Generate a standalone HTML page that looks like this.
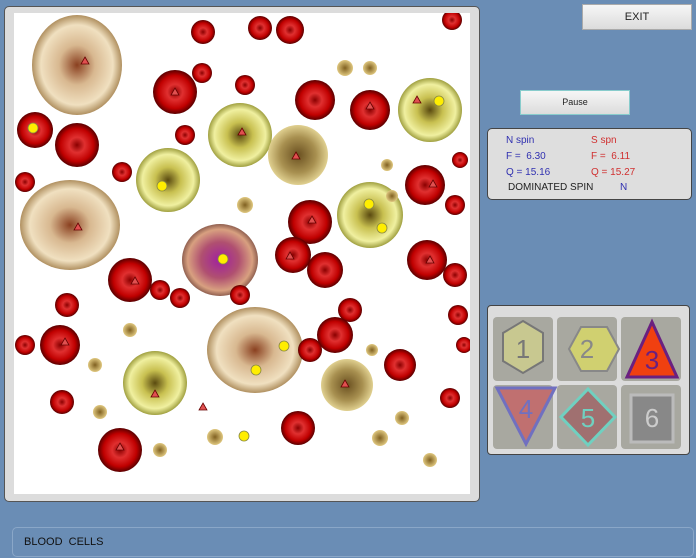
<!DOCTYPE html>
<html><head><style>
body{margin:0;width:696px;height:558px;background:#6a8db5;position:relative;overflow:hidden;font-family:"Liberation Sans",sans-serif}
.frame{position:absolute;left:4px;top:6px;width:474px;height:494px;background:#dcdcdc;border:1px solid #555;border-radius:5px}
.btn{position:absolute;background:linear-gradient(#f6f6f6,#dcdcdc);border:1px solid #aaa;font-size:11px;text-align:center;color:#222}
.info{position:absolute;left:487px;top:128px;width:203px;height:70px;background:#dedede;border:1px solid #444;border-radius:5px;font-size:10px}
.info span{position:absolute}
.shp{position:absolute;left:487px;top:305px;width:201px;height:148px;background:#dcdcdc;border:1px solid #444;border-radius:4px}
.bar{position:absolute;left:12px;top:527px;width:680px;height:28px;border:1px solid #8aa7c8;border-radius:5px;background:#6a8db5;font-size:11px;color:#111}
</style></head><body>
<div class="frame"></div>
<svg style="position:absolute;left:14px;top:13px" width="456" height="481" viewBox="14 13 456 481">
<defs>
<radialGradient id="r"><stop offset="0" stop-color="#8a0000"/><stop offset=".35" stop-color="#e03030"/><stop offset=".75" stop-color="#c00000"/><stop offset="1" stop-color="#5a0000"/></radialGradient>
<radialGradient id="c"><stop offset="0" stop-color="#8a4020"/><stop offset=".4" stop-color="#d8b890"/><stop offset=".8" stop-color="#f0e0c0"/><stop offset="1" stop-color="#b09060"/></radialGradient>
<radialGradient id="y"><stop offset="0" stop-color="#5a4a10"/><stop offset=".4" stop-color="#c8c050"/><stop offset=".8" stop-color="#f0f0a0"/><stop offset="1" stop-color="#a0a040"/></radialGradient>
<radialGradient id="t"><stop offset="0" stop-color="#6a5020"/><stop offset=".6" stop-color="#a89050"/><stop offset="1" stop-color="#e0d090"/></radialGradient>
<radialGradient id="p"><stop offset="0" stop-color="#a020a0"/><stop offset=".5" stop-color="#b05070"/><stop offset=".85" stop-color="#d8a080"/><stop offset="1" stop-color="#906050"/></radialGradient>
<radialGradient id="s"><stop offset="0" stop-color="#806020"/><stop offset="1" stop-color="#e0c880"/></radialGradient>
</defs>
<rect x="14" y="13" width="456" height="481" fill="#fff"/>
<g fill="url(#c)"><ellipse cx="77" cy="65" rx="45" ry="50"/><ellipse cx="70" cy="225" rx="50" ry="45"/><ellipse cx="255" cy="350" rx="48" ry="43"/></g>
<ellipse cx="220" cy="260" rx="38" ry="36" fill="url(#p)"/>
<g fill="url(#y)"><circle cx="240" cy="135" r="32"/><circle cx="168" cy="180" r="32"/><circle cx="370" cy="215" r="33"/><circle cx="430" cy="110" r="32"/><circle cx="155" cy="383" r="32"/></g>
<g fill="url(#t)"><circle cx="298" cy="155" r="30"/><circle cx="347" cy="385" r="26"/></g>
<g fill="url(#r)">
<circle cx="203" cy="32" r="12"/><circle cx="260" cy="28" r="12"/><circle cx="290" cy="30" r="14"/><circle cx="452" cy="20" r="10"/><circle cx="175" cy="92" r="22"/><circle cx="202" cy="73" r="10"/><circle cx="245" cy="85" r="10"/><circle cx="315" cy="100" r="20"/><circle cx="370" cy="110" r="20"/><circle cx="35" cy="130" r="18"/><circle cx="77" cy="145" r="22"/><circle cx="185" cy="135" r="10"/><circle cx="25" cy="182" r="10"/><circle cx="122" cy="172" r="10"/><circle cx="425" cy="185" r="20"/><circle cx="455" cy="205" r="10"/><circle cx="310" cy="222" r="22"/><circle cx="293" cy="255" r="18"/><circle cx="325" cy="270" r="18"/><circle cx="130" cy="280" r="22"/><circle cx="160" cy="290" r="10"/><circle cx="180" cy="298" r="10"/><circle cx="240" cy="295" r="10"/><circle cx="427" cy="260" r="20"/><circle cx="455" cy="275" r="12"/><circle cx="67" cy="305" r="12"/><circle cx="60" cy="345" r="20"/><circle cx="25" cy="345" r="10"/><circle cx="350" cy="310" r="12"/><circle cx="335" cy="335" r="18"/><circle cx="310" cy="350" r="12"/><circle cx="400" cy="365" r="16"/><circle cx="450" cy="398" r="10"/><circle cx="62" cy="402" r="12"/><circle cx="298" cy="428" r="17"/><circle cx="120" cy="450" r="22"/><circle cx="458" cy="315" r="10"/><circle cx="464" cy="345" r="8"/><circle cx="460" cy="160" r="8"/>
</g>
<g fill="url(#s)"><circle cx="345" cy="68" r="8"/><circle cx="370" cy="68" r="7"/><circle cx="387" cy="165" r="6"/><circle cx="245" cy="205" r="8"/><circle cx="130" cy="330" r="7"/><circle cx="95" cy="365" r="7"/><circle cx="100" cy="412" r="7"/><circle cx="160" cy="450" r="7"/><circle cx="215" cy="437" r="8"/><circle cx="380" cy="438" r="8"/><circle cx="430" cy="460" r="7"/><circle cx="402" cy="418" r="7"/><circle cx="372" cy="350" r="6"/><circle cx="392" cy="196" r="6"/></g>
<g fill="#e05050" stroke="#600" stroke-width=".8">
<path d="M85 57l4 7h-8z"/><path d="M78 223l4 7h-8z"/><path d="M175 88l4 7h-8z"/><path d="M242 128l4 7h-8z"/><path d="M296 152l4 7h-8z"/><path d="M370 102l4 7h-8z"/><path d="M417 96l4 7h-8z"/><path d="M433 180l4 7h-8z"/><path d="M312 216l4 7h-8z"/><path d="M430 256l4 7h-8z"/><path d="M155 390l4 7h-8z"/><path d="M203 403l4 7h-8z"/><path d="M345 380l4 7h-8z"/><path d="M120 443l4 7h-8z"/><path d="M65 338l4 7h-8z"/><path d="M135 277l4 7h-8z"/><path d="M290 252l4 7h-8z"/>
</g>
<g fill="#ffee00" stroke="#884" stroke-width=".8">
<circle cx="33" cy="128" r="5"/><circle cx="162" cy="186" r="5"/><circle cx="369" cy="204" r="5"/><circle cx="382" cy="228" r="5"/><circle cx="439" cy="101" r="5"/><circle cx="223" cy="259" r="5"/><circle cx="284" cy="346" r="5"/><circle cx="256" cy="370" r="5"/><circle cx="244" cy="436" r="5"/>
</g>
</svg>
<div class="btn" style="left:582px;top:4px;width:108px;height:24px;line-height:24px">EXIT</div>
<div class="btn" style="left:520px;top:90px;width:108px;height:23px;line-height:23px;font-size:9px;border-color:#8cc">Pause</div>
<div class="info">
<span style="left:18px;top:6px;color:#3030b0">N spin</span><span style="left:103px;top:6px;color:#d03030">S spn</span>
<span style="left:18px;top:22px;color:#3030b0">F =&nbsp; 6.30</span><span style="left:103px;top:22px;color:#d03030">F =&nbsp; 6.11</span>
<span style="left:18px;top:38px;color:#3030b0">Q = 15.16</span><span style="left:103px;top:38px;color:#d03030">Q = 15.27</span>
<span style="left:20px;top:53px;color:#222">DOMINATED SPIN</span><span style="left:132px;top:53px;color:#3030b0">N</span>
</div>
<div class="shp">
<svg width="201" height="148" font-family="Liberation Sans" font-size="26" text-anchor="middle">
<g fill="#a8a8a0"><rect x="5" y="11" width="60" height="64" rx="4"/><rect x="69" y="11" width="60" height="64" rx="4"/><rect x="133" y="11" width="60" height="64" rx="4"/><rect x="5" y="79" width="60" height="64" rx="4"/><rect x="69" y="79" width="60" height="64" rx="4"/><rect x="133" y="79" width="60" height="64" rx="4"/></g>
<path d="M35 15l20 12v28l-20 12-20-12V27z" fill="#c8c890" stroke="#777" stroke-width="2"/><text x="35" y="52" fill="#777">1</text>
<path d="M84 45l12-22h26l12 22-12 22H96z" transform="translate(-3 -2)" fill="#d0d070" stroke="#888" stroke-width="2"/><text x="99" y="52" fill="#888">2</text>
<path d="M171 16l25 55h-50z" transform="translate(-7 0)" fill="#f04010" stroke="#6a2080" stroke-width="3"/><text x="164" y="63" fill="#6a2080">3</text>
<path d="M9 82h58l-29 56z" fill="#c07070" stroke="#7070c0" stroke-width="3"/><text x="38" y="112" fill="#7070c0">4</text>
<path d="M100 83l27 28-27 28-27-28z" fill="#a07070" stroke="#70d0c0" stroke-width="3"/><text x="100" y="121" fill="#70d0c0">5</text>
<rect x="143" y="89" width="42" height="47" fill="#888" stroke="#bbb" stroke-width="3"/><text x="164" y="121" fill="#ccc">6</text>
</svg>
</div>
<div class="bar"><span style="position:absolute;left:11px;top:8px">BLOOD&nbsp; CELLS</span></div>
</body></html>
